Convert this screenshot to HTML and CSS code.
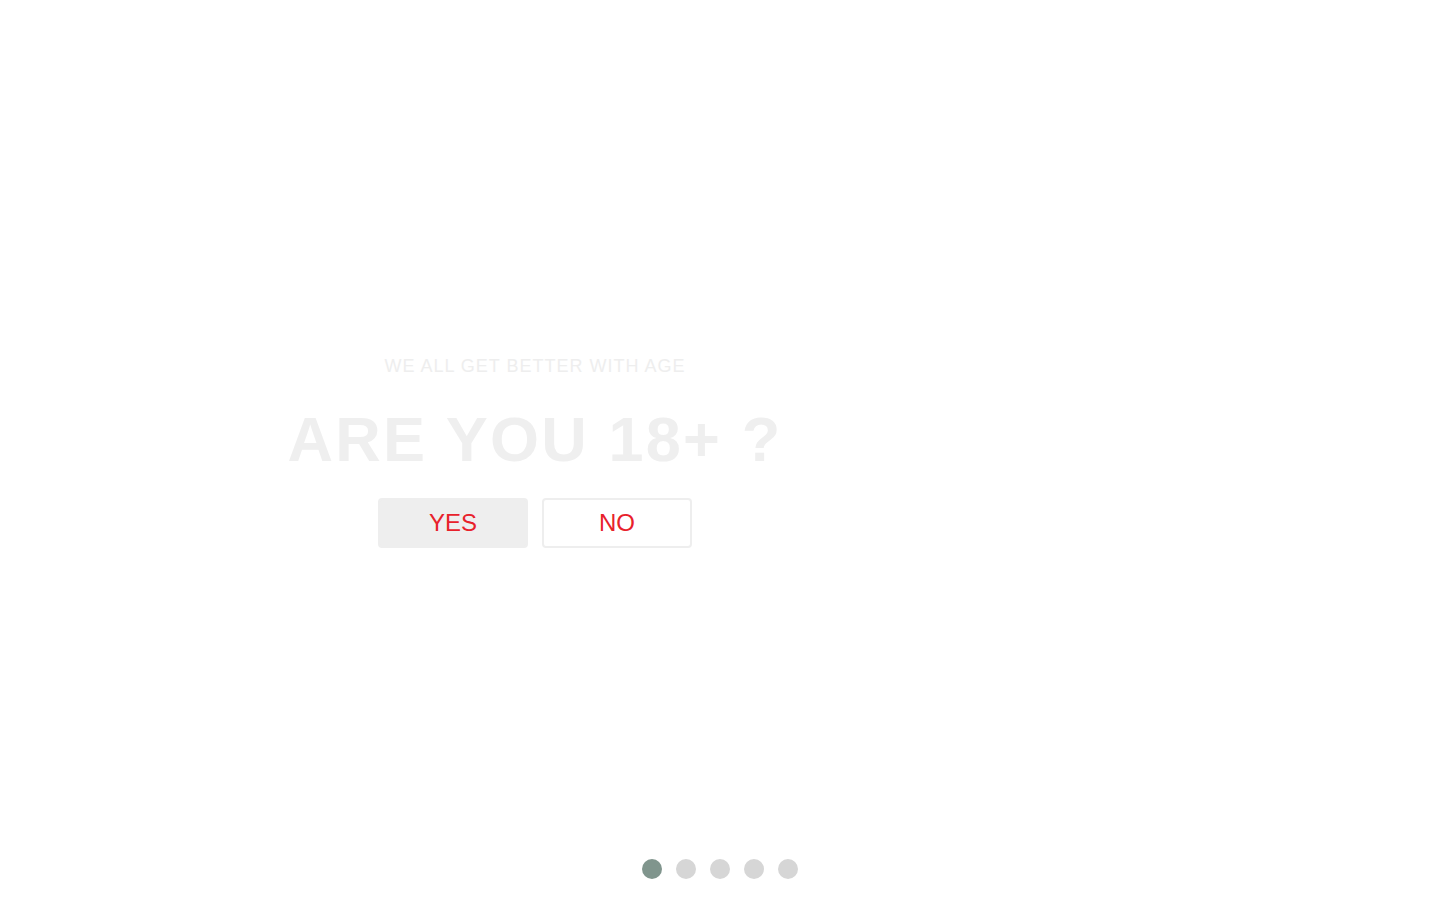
FILE: index.html
```html
<!DOCTYPE html>
<html lang="en">
<head>
<meta charset="utf-8">
<title>Age verification</title>
<link rel="stylesheet" href="styles.css">
</head>
<body>
<div class="slider">
  <section class="slide">
    <div class="age-gate">
      <p class="tagline">WE ALL GET BETTER WITH AGE</p>
      <h1 class="title">ARE YOU 18+ ?</h1>
      <div class="actions">
        <button class="btn btn-yes">YES</button>
        <button class="btn btn-no">NO</button>
      </div>
    </div>
  </section>
  <div class="dots">
    <span class="dot active"></span>
    <span class="dot"></span>
    <span class="dot"></span>
    <span class="dot"></span>
    <span class="dot"></span>
  </div>
</div>
</body>
</html>
```
FILE: styles.css
```css
* { box-sizing: border-box; }
html, body {
  margin: 0;
  padding: 0;
  background: #ffffff;
  font-family: "Liberation Sans", Arial, sans-serif;
}
.slider {
  position: relative;
  height: 900px;
  overflow: hidden;
}
.slide {
  height: 100%;
  display: flex;
  align-items: center;
  padding-top: 2px;
}
.age-gate {
  width: 1070px;
  display: flex;
  flex-direction: column;
  align-items: center;
  text-align: center;
}
.tagline {
  margin: 0;
  font-size: 18px;
  line-height: 23px;
  letter-spacing: 1px;
  color: #eeeeee;
}
.title {
  margin: 29px 0 0;
  font-size: 63px;
  line-height: 64px;
  font-weight: 700;
  letter-spacing: 2.2px;
  color: #efefef;
}
.actions {
  margin-top: 27px;
  display: flex;
  gap: 14px;
}
.btn {
  width: 150px;
  height: 50px;
  border-radius: 4px;
  font-family: "Liberation Sans", Arial, sans-serif;
  font-size: 24px;
  color: #e8212b;
  cursor: pointer;
  padding: 0;
}
.btn-yes {
  background: #eeeeee;
  border: 2px solid #eeeeee;
}
.btn-no {
  background: #ffffff;
  border: 2px solid #eeeeee;
}
.dots {
  position: absolute;
  left: 0;
  right: 0;
  bottom: 21px;
  display: flex;
  justify-content: center;
  gap: 14px;
}
.dot {
  width: 20px;
  height: 20px;
  border-radius: 50%;
  background: #d6d6d6;
}
.dot.active {
  background: #80958d;
}
```
